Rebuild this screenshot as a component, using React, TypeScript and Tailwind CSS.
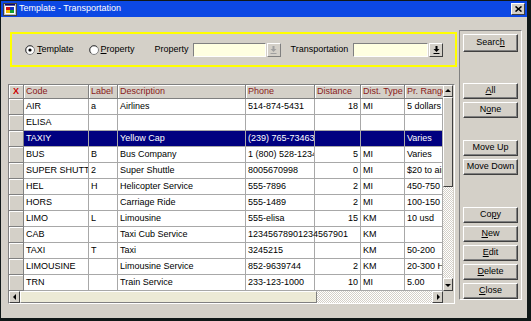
import type { ReactNode } from "react";

type Row = {
  code: string;
  label: string;
  desc: string;
  phone: string;
  dist: string;
  type: string;
  range: string;
};

const ROWS: Row[] = [
  { code: "AIR", label: "a", desc: "Airlines", phone: "514-874-5431", dist: "18", type: "MI", range: "5 dollars" },
  { code: "ELISA", label: "", desc: "", phone: "", dist: "", type: "", range: "" },
  { code: "TAXIY", label: "", desc: "Yellow Cap", phone: "(239) 765-7346386", dist: "", type: "", range: "Varies" },
  { code: "BUS", label: "B", desc: "Bus Company", phone: "1 (800) 528-1234", dist: "5", type: "MI", range: "Varies" },
  { code: "SUPER SHUTTLE", label: "2", desc: "Super Shuttle", phone: "8005670998", dist: "0", type: "MI", range: "$20 to airport" },
  { code: "HEL", label: "H", desc: "Helicopter Service", phone: "555-7896", dist: "2", type: "MI", range: "450-750 usd" },
  { code: "HORS", label: "", desc: "Carriage Ride", phone: "555-1489", dist: "2", type: "MI", range: "100-150" },
  { code: "LIMO", label: "L", desc: "Limousine", phone: "555-elisa", dist: "15", type: "KM", range: "10 usd" },
  { code: "CAB", label: "", desc: "Taxi Cub Service", phone: "12345678901234567901", dist: "", type: "KM", range: "" },
  { code: "TAXI", label: "T", desc: "Taxi", phone: "3245215", dist: "", type: "KM", range: "50-200" },
  { code: "LIMOUSINE", label: "", desc: "Limousine Service", phone: "852-9639744", dist: "2", type: "KM", range: "20-300 HKD" },
  { code: "TRN", label: "", desc: "Train Service", phone: "233-123-1000", dist: "10", type: "MI", range: "5.00" },
];

const SELECTED = 2;

function Radio({ checked }: { checked?: boolean }) {
  return (
    <svg width="10" height="10" viewBox="0 0 10 10" className="shrink-0">
      <circle cx="5" cy="5" r="4.5" fill="#ffffff" stroke="#808080" />
      <path d="M2 8 A4 4 0 0 1 8 2" fill="none" stroke="#404040" strokeWidth="1" />
      {checked ? <circle cx="5" cy="5" r="1.6" fill="#000000" /> : null}
    </svg>
  );
}

function DropArrow({ disabled }: { disabled?: boolean }) {
  const c = disabled ? "#a0a0a0" : "#000000";
  return (
    <svg width="7" height="8" viewBox="0 0 7 8">
      <rect x="2.5" y="0" width="2" height="3" fill={c} />
      <path d="M0.5 3 H6.5 L3.5 6 Z" fill={c} />
      <rect x="0.5" y="7" width="6" height="1" fill={c} />
    </svg>
  );
}

function Btn({ children, className = "" }: { children: ReactNode; className?: string }) {
  return (
    <div
      className={
        "flex w-[55px] items-center justify-center border border-t-white border-l-white border-r-[#404040] border-b-[#404040] bg-[#d4d0c8] shadow-[inset_-1px_-1px_#808080] " +
        className
      }
    >
      {children}
    </div>
  );
}

function ScrollBtn({ dir, className = "" }: { dir: "up" | "down" | "left" | "right"; className?: string }) {
  const d =
    dir === "up"
      ? "M1 5 L4 2 L7 5 Z"
      : dir === "down"
        ? "M1 3 L4 6 L7 3 Z"
        : dir === "left"
          ? "M5 1 L2 4 L5 7 Z"
          : "M3 1 L6 4 L3 7 Z";
  return (
    <div
      className={
        "flex shrink-0 items-center justify-center border border-t-white border-l-white border-r-[#404040] border-b-[#404040] bg-[#d4d0c8] " +
        className
      }
    >
      <svg width="8" height="8" viewBox="0 0 8 8">
        <path d={d} fill="#000000" />
      </svg>
    </div>
  );
}

function HeadCell({ children, className = "" }: { children?: ReactNode; className?: string }) {
  return (
    <div
      className={
        "h-[14px] overflow-hidden whitespace-nowrap border-r border-b border-[#808080] bg-[#d4d0c8] px-[2px] leading-[13px] text-[#8b1a1a] shadow-[inset_1px_1px_#ffffff] " +
        className
      }
    >
      {children}
    </div>
  );
}

function Cell({
  children,
  selected,
  right,
  spill,
}: {
  children?: ReactNode;
  selected?: boolean;
  right?: boolean;
  spill?: boolean;
}) {
  return (
    <div
      className={
        "h-[16px] whitespace-nowrap border-r border-b border-[#a8a8a8] px-[2px] leading-[15px] " +
        (selected ? "bg-[#000080] text-white " : "bg-white ") +
        (right ? "text-right " : "") +
        (spill ? "relative z-10 overflow-visible" : "overflow-hidden")
      }
    >
      {children}
    </div>
  );
}

export default function App() {
  return (
    <div className="flex h-[321px] w-[531px] flex-col overflow-hidden border-t border-l border-r-[4px] border-b-[3px] border-[#101818] bg-[#d4d0c8] font-['Liberation_Sans',Arial,sans-serif] text-[9px] text-black">
      {/* title bar */}
      <div className="flex h-[16px] shrink-0 items-center bg-[#0c48e4] pl-[2px] pr-[2px]">
        <svg width="14" height="13" viewBox="0 0 14 13" className="shrink-0">
          <rect x="0.5" y="0.5" width="13" height="12" fill="#c0c0c0" stroke="#404040" />
          <rect x="2" y="3" width="10" height="8" fill="#ffffff" />
          <rect x="3" y="4" width="4" height="3" fill="#d01010" />
          <rect x="7" y="4" width="4" height="3" fill="#1030c0" />
          <rect x="3" y="7" width="4" height="3" fill="#f0c000" />
          <rect x="7" y="7" width="4" height="3" fill="#10a030" />
          <rect x="2" y="1" width="10" height="1.5" fill="#000080" />
        </svg>
        <span className="ml-[2px] text-[9px] text-white">Template - Transportation</span>
        <div className="ml-auto flex h-[12px] w-[14px] items-center justify-center border border-t-white border-l-white border-r-[#404040] border-b-[#404040] bg-[#d4d0c8]">
          <svg width="7" height="6" viewBox="0 0 7 6">
            <path d="M0.5 0.5 L6.5 5.5 M6.5 0.5 L0.5 5.5" stroke="#000000" strokeWidth="1.6" />
          </svg>
        </div>
      </div>

      {/* body */}
      <div className="flex pl-[7px] pt-[13px]">
        <div className="mt-[2px] flex w-[449px] flex-col">
          {/* filter box */}
          <div className="ml-[2px] flex h-[35px] w-[447px] items-center border-2 border-[#ffff00] pl-[13px]">
            <Radio checked />
            <span className="ml-[2px]">
              <span className="underline">T</span>emplate
            </span>
            <span className="ml-[15px]">
              <Radio />
            </span>
            <span className="ml-[2px]">
              <span className="underline">P</span>roperty
            </span>
            <span className="ml-[20px]">Property</span>
            <div className="ml-[4px] h-[14px] w-[73px] border border-t-[#808080] border-l-[#808080] border-r-white border-b-white bg-[#ffffe1]" />
            <div className="ml-[1px] flex h-[14px] w-[14px] items-center justify-center border border-t-white border-l-white border-r-[#808080] border-b-[#808080] bg-[#d4d0c8]">
              <DropArrow disabled />
            </div>
            <span className="ml-[10px]">Transportation</span>
            <div className="ml-[5px] h-[14px] w-[75px] border border-t-[#808080] border-l-[#808080] border-r-white border-b-white bg-[#ffffe1]" />
            <div className="ml-[1px] flex h-[14px] w-[14px] items-center justify-center border border-t-white border-l-white border-r-[#404040] border-b-[#404040] bg-[#d4d0c8]">
              <DropArrow />
            </div>
          </div>

          {/* grid */}
          <div className="mt-[17px] flex h-[220px] w-[447px] flex-col border border-t-[#808080] border-l-[#808080] border-r-white border-b-white">
            <div className="flex">
              <div className="flex w-[434px] flex-col">
                <div className="grid grid-cols-[15px_65px_29px_128px_69px_46px_44px_38px]">
                  <HeadCell className="text-center font-bold text-[#cc0000]">X</HeadCell>
                  <HeadCell>Code</HeadCell>
                  <HeadCell>Label</HeadCell>
                  <HeadCell>Description</HeadCell>
                  <HeadCell>Phone</HeadCell>
                  <HeadCell>Distance</HeadCell>
                  <HeadCell>Dist. Type</HeadCell>
                  <HeadCell className="border-r-0">Pr. Range</HeadCell>
                </div>
                {ROWS.map((r, i) => {
                  const sel = i === SELECTED;
                  return (
                    <div key={r.code} className="grid grid-cols-[15px_65px_29px_128px_69px_46px_44px_38px]">
                      <div className="h-[16px] border-r border-b border-[#808080] bg-[#d4d0c8] shadow-[inset_1px_1px_#ffffff]" />
                      <Cell selected={sel}>{r.code}</Cell>
                      <Cell selected={sel}>{r.label}</Cell>
                      <Cell selected={sel}>{r.desc}</Cell>
                      <Cell selected={sel} spill={r.code === "CAB"}>
                        {r.phone}
                      </Cell>
                      <Cell selected={sel} right>
                        {r.dist}
                      </Cell>
                      <Cell selected={sel}>{r.type}</Cell>
                      <Cell selected={sel}>{r.range}</Cell>
                    </div>
                  );
                })}
              </div>
              {/* vertical scrollbar */}
              <div className="flex h-[206px] w-[10px] flex-col">
                <ScrollBtn dir="up" className="h-[12px]" />
                <div className="h-[90px] border border-t-white border-l-white border-r-[#404040] border-b-[#404040] bg-[#d4d0c8]" />
                <div className="flex-1 bg-[repeating-conic-gradient(#ffffff_0_25%,#d4d0c8_0_50%)] bg-[length:2px_2px]" />
                <ScrollBtn dir="down" className="h-[13px]" />
              </div>
            </div>
            {/* horizontal scrollbar */}
            <div className="flex h-[12px]">
              <ScrollBtn dir="left" className="w-[11px]" />
              <div className="w-[297px] border border-t-white border-l-white border-r-[#808080] border-b-[#808080] bg-[#ecead6]" />
              <div className="flex-1 bg-[repeating-conic-gradient(#ffffff_0_25%,#d4d0c8_0_50%)] bg-[length:2px_2px]" />
              <ScrollBtn dir="right" className="w-[11px]" />
              <div className="w-[11px] bg-[#d4d0c8]" />
            </div>
          </div>
        </div>

        {/* right button panel */}
        <div className="ml-[2px] flex h-[270px] w-[63px] flex-col border border-t-[#808080] border-l-[#808080] border-r-white border-b-white pl-[3px] pt-[3px]">
          <Btn className="h-[18px]">
            <span>
              Searc<span className="underline">h</span>
            </span>
          </Btn>
          <Btn className="mt-[31px] h-[16px]">
            <span>
              <span className="underline">A</span>ll
            </span>
          </Btn>
          <Btn className="mt-[3px] h-[16px]">
            <span>
              N<span className="underline">o</span>ne
            </span>
          </Btn>
          <Btn className="mt-[22px] h-[16px]">Move Up</Btn>
          <Btn className="mt-[3px] h-[16px]">Move Down</Btn>
          <Btn className="mt-[32px] h-[16px]">
            <span>
              Co<span className="underline">p</span>y
            </span>
          </Btn>
          <Btn className="mt-[3px] h-[16px]">
            <span>
              <span className="underline">N</span>ew
            </span>
          </Btn>
          <Btn className="mt-[3px] h-[16px]">
            <span>
              <span className="underline">E</span>dit
            </span>
          </Btn>
          <Btn className="mt-[3px] h-[16px]">
            <span>
              <span className="underline">D</span>elete
            </span>
          </Btn>
          <Btn className="mt-[3px] h-[16px]">
            <span>
              <span className="underline">C</span>lose
            </span>
          </Btn>
        </div>
      </div>
    </div>
  );
}
